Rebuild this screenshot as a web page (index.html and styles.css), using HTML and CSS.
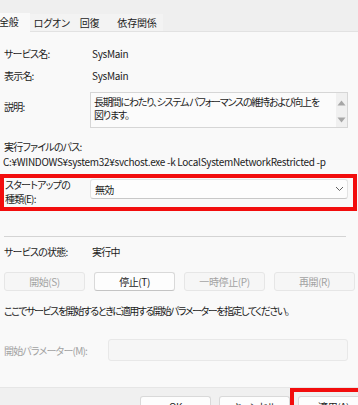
FILE: index.html
```html
<!DOCTYPE html>
<html lang="ja">
<head>
<meta charset="utf-8">
<link rel="stylesheet" href="styles.css">
</head>
<body>
<div class="tabs">
  <div class="tab tab-active">全般</div>
  <div class="tab tab-logon">ログオン</div>
  <div class="tab tab-recovery">回復</div>
  <div class="tab tab-deps">依存関係</div>
</div>
<div class="main">
  <div class="row row-first"><span class="label">サービス名:</span><span class="latin">SysMain</span></div>
  <div class="row row-second"><span class="label">表示名:</span><span class="latin">SysMain</span></div>
  <div class="desc-row">
    <div class="label desc-label">説明:</div>
    <div class="desc-box">
      <div class="desc-text">長期間にわたり、システム パフォーマンスの維持および向上を<br>図ります。</div>
      <div class="scroll">
        <svg width="9" height="6" viewBox="0 0 9 6"><path d="M4.5 0.5 L8.5 5.5 L0.5 5.5 Z" fill="#a6a6a6"/></svg>
        <svg width="9" height="6" viewBox="0 0 9 6"><path d="M0.5 0.5 L8.5 0.5 L4.5 5.5 Z" fill="#a6a6a6"/></svg>
      </div>
    </div>
  </div>
  <div class="path-label">実行ファイルのパス:</div>
  <div class="path latin">C:¥WINDOWS¥system32¥svchost.exe -k LocalSystemNetworkRestricted -p</div>
  <div class="startup-row">
    <div class="label startup-label">スタートアップの<br>種類(E):</div>
    <div class="combo">
      <span>無効</span>
      <svg width="9" height="6" viewBox="0 0 9 6"><path d="M1 1 L4.5 4.5 L8 1" fill="none" stroke="#606060" stroke-width="1"/></svg>
    </div>
  </div>
  <div class="separator"></div>
  <div class="row row-status"><span class="label">サービスの状態:</span><span>実行中</span></div>
  <div class="buttons">
    <div class="btn btn-disabled">開始(S)</div>
    <div class="btn">停止(T)</div>
    <div class="btn btn-disabled">一時停止(P)</div>
    <div class="btn btn-disabled">再開(R)</div>
  </div>
  <div class="hint">ここでサービスを開始するときに適用する開始パラメーターを指定してください。</div>
  <div class="param-row">
    <div class="param-label">開始パラメーター(M):</div>
    <div class="param-input"></div>
  </div>
</div>
<div class="footer">
  <div class="btn fbtn">OK</div>
  <div class="btn fbtn">キャンセル</div>
  <div class="btn fbtn">適用(A)</div>
</div>
<div class="mark mark-startup"></div>
<div class="mark mark-apply"></div>
</body>
</html>
```
FILE: styles.css
```css
html, body {
  margin: 0;
  padding: 0;
}
body {
  width: 358px;
  height: 405px;
  overflow: hidden;
  position: relative;
  background: #f9f9f9;
  color: #1b1b1b;
  font-family: "Noto Sans CJK JP", "Noto Sans", sans-serif;
  font-size: 10px;
  letter-spacing: -0.8px;
  font-feature-settings: "palt";
}
.latin {
  letter-spacing: -0.3px;
}
.tabs {
  height: 31px;
  background: #efefef;
  border-bottom: 1px solid #e2e2e2;
  display: flex;
  align-items: flex-end;
  margin-left: -10px;
  letter-spacing: -0.2px;
}
.tab {
  height: 17px;
  line-height: 17px;
  background: #f3f3f3;
  white-space: nowrap;
}
.tab-active {
  height: 19px;
  line-height: 18px;
  margin-bottom: -1px;
  background: #f9f9f9;
  padding: 0 11px 0 9px;
  position: relative;
}
.tab-logon {
  padding: 0 5px 0 4px;
}
.tab-recovery {
  padding: 0 10px 0 5px;
}
.tab-deps {
  padding: 0 6px 0 8px;
}
.main {
  padding: 0 10px 0 4px;
}
.row {
  display: flex;
  height: 16px;
  line-height: 16px;
}
.label {
  width: 88px;
  flex: none;
}
.row-first { margin-top: 14px; }
.row-second { margin-top: 6px; }
.desc-row {
  display: flex;
  margin-top: 8px;
}
.desc-label {
  width: 86px;
  line-height: 16px;
  padding-top: 7px;
}
.desc-box {
  flex: 1;
  height: 34px;
  border: 1px solid #d6d6d6;
  background: #fbfbfb;
  display: flex;
}
.desc-text {
  flex: 1;
  padding: 2px 4px 0 3px;
  line-height: 13px;
  letter-spacing: -1.2px;
  white-space: nowrap;
}
.scroll {
  width: 11px;
  background: #f0f0f0;
  display: flex;
  flex-direction: column;
  align-items: center;
  justify-content: space-between;
  padding: 7px 0 4px;
}
.path-label {
  margin-top: 12px;
  line-height: 14px;
  height: 14px;
}
.path {
  margin-top: 1px;
  margin-left: -1px;
  line-height: 14px;
  height: 14px;
  white-space: nowrap;
}
.startup-row {
  display: flex;
  margin-top: 9px;
}
.startup-label {
  width: 86px;
  line-height: 13.5px;
  padding-left: 1px;
  box-sizing: border-box;
  white-space: nowrap;
}
.combo {
  flex: 1;
  height: 18px;
  margin-top: 1px;
  border: 1px solid #e3e3e3;
  border-bottom-color: #c8c8c8;
  border-radius: 3px;
  background: #fdfdfd;
  display: flex;
  align-items: center;
  justify-content: space-between;
  padding: 0 3px 0 4px;
}
.separator {
  margin-top: 31px;
  margin-right: 2px;
  height: 1px;
  background: #d4d4d4;
}
.row-status { margin-top: 7px; }
.buttons {
  display: flex;
  gap: 9px;
  margin-top: 12px;
}
.btn {
  width: 79px;
  height: 17px;
  line-height: 17px;
  text-align: center;
  background: #fdfdfd;
  border: 1px solid #d9d9d9;
  border-bottom-color: #c4c4c4;
  border-radius: 3px;
  flex: none;
  white-space: nowrap;
  letter-spacing: -0.4px;
}
.btn-disabled {
  background: #f6f6f6;
  border-color: #e6e6e6;
  color: #a2a2a2;
}
.hint {
  margin-top: 12px;
  line-height: 16px;
  height: 16px;
  white-space: nowrap;
  letter-spacing: -1.45px;
}
.param-row {
  display: flex;
  align-items: center;
  margin-top: 20px;
  height: 22px;
}
.param-label {
  width: 104px;
  flex: none;
  color: #a2a2a2;
}
.param-input {
  flex: 1;
  height: 20px;
  border: 1px solid #e8e8e8;
  border-radius: 3px;
  background: #f6f6f6;
}
.footer {
  margin-top: 26px;
  height: 40px;
  background: #f0f0f0;
  border-top: 1px solid #e6e6e6;
  display: flex;
  gap: 8px;
  padding: 8px 0 0 140px;
}
.fbtn {
  width: 69px;
  height: 20px;
  line-height: 20px;
}
.mark {
  position: absolute;
  border: 4px solid #f20d0d;
}
.mark-startup {
  left: 0;
  top: 174px;
  width: 349px;
  height: 29px;
}
.mark-apply {
  left: 290px;
  top: 388px;
  width: 100px;
  height: 40px;
}
```
